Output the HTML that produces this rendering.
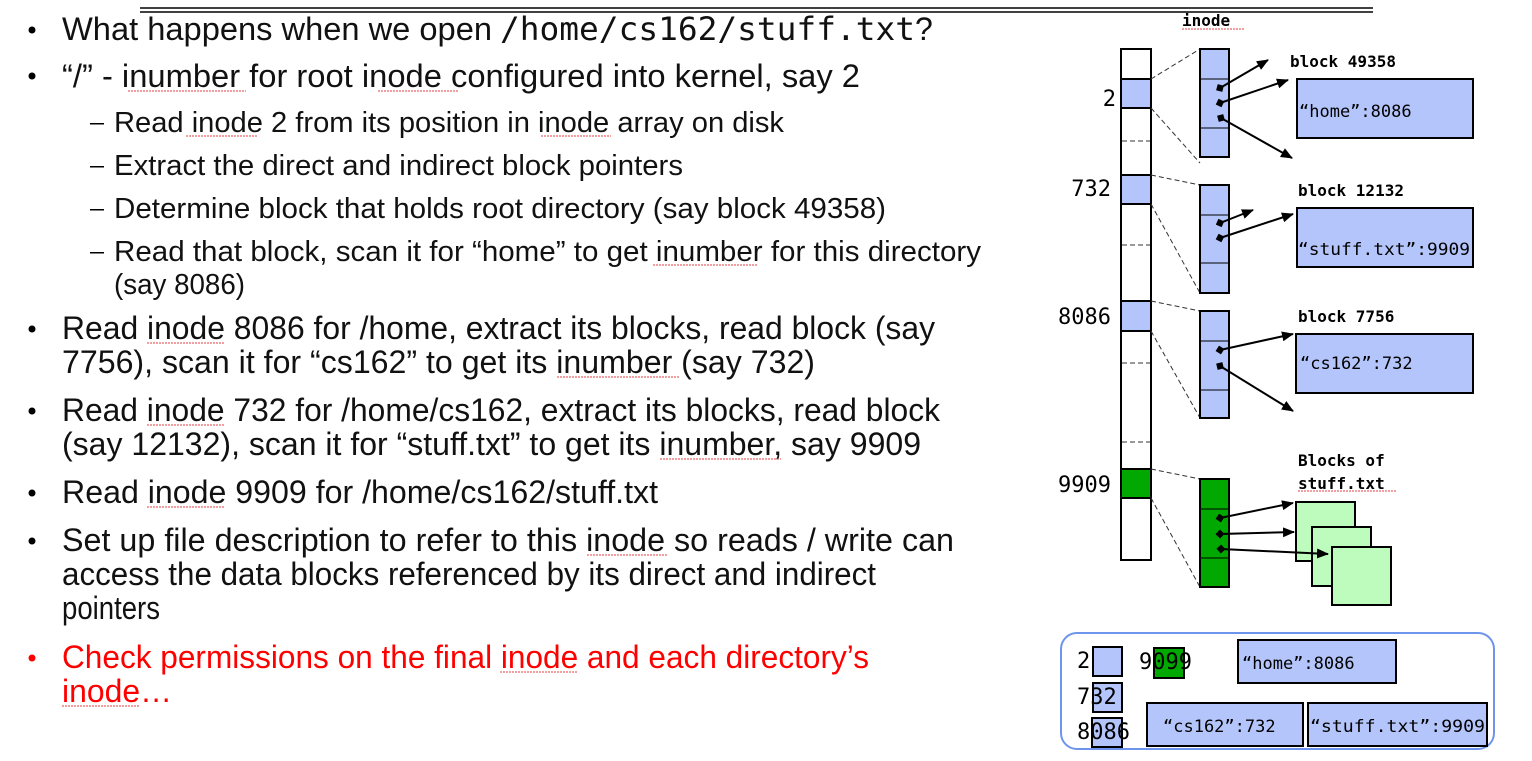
<!DOCTYPE html>
<html><head><meta charset="utf-8"><style>
html,body{margin:0;padding:0;background:#fff;}
svg{display:block;}
.t{font-family:"Liberation Sans",sans-serif;font-size:32px;fill:#111;}
.s{font-family:"Liberation Sans",sans-serif;font-size:29px;fill:#111;}
.r{fill:#f00;}
.m{font-family:"DejaVu Sans Mono","Liberation Mono",monospace;}
.b{font-family:"DejaVu Sans Mono","Liberation Mono",monospace;font-weight:bold;font-size:16px;}
.n{font-family:"DejaVu Sans Mono","Liberation Mono",monospace;font-size:22px;}
.lt{font-family:"DejaVu Sans Mono","Liberation Mono",monospace;font-size:17px;}
</style></head><body>
<svg width="1532" height="761" viewBox="0 0 1532 761" xmlns="http://www.w3.org/2000/svg">
<defs>
<marker id="ah" markerWidth="12" markerHeight="10" refX="11" refY="5" orient="auto" markerUnits="userSpaceOnUse"><path d="M0,0 L12,5 L0,10 z" fill="#000"/></marker>
<marker id="dm" markerWidth="9" markerHeight="9" refX="4.5" refY="4.5" orient="auto" markerUnits="userSpaceOnUse"><path d="M4.5,0 L9,4.5 L4.5,9 L0,4.5 z" fill="#000"/></marker>
</defs>
<line x1="140" y1="8" x2="1373" y2="8" stroke="#000" stroke-width="1.5"/>
<line x1="140" y1="12" x2="1373" y2="12" stroke="#000" stroke-width="1.5"/>

<g fill="#000">
<circle cx="32" cy="30" r="3.5"/><circle cx="32" cy="76" r="3.5"/>
<circle cx="32" cy="329" r="3.5"/><circle cx="32" cy="411" r="3.5"/>
<circle cx="32" cy="493" r="3.5"/><circle cx="32" cy="541" r="3.5"/>
<circle cx="32" cy="658" r="3.5" fill="#f00"/>
<rect x="90" y="123" width="14" height="1.5"/><rect x="90" y="166" width="14" height="1.5"/>
<rect x="90" y="209" width="14" height="1.5"/><rect x="90" y="252" width="14" height="1.5"/>
</g>
<text class="t" x="62" y="40" textLength="430" lengthAdjust="spacingAndGlyphs">What happens when we open</text>
<text class="t m" x="500" y="40" textLength="415" lengthAdjust="spacingAndGlyphs">/home/cs162/stuff.txt</text>
<text class="t" x="915" y="40">?</text>
<text class="t" x="62" y="87" textLength="798" lengthAdjust="spacingAndGlyphs">“/” - inumber for root inode configured into kernel, say 2</text>
<text class="s" x="114" y="132" textLength="670" lengthAdjust="spacingAndGlyphs">Read inode 2 from its position in inode array on disk</text>
<text class="s" x="114" y="175" textLength="569" lengthAdjust="spacingAndGlyphs">Extract the direct and indirect block pointers</text>
<text class="s" x="114" y="218" textLength="772" lengthAdjust="spacingAndGlyphs">Determine block that holds root directory (say block 49358)</text>
<text class="s" x="114" y="261" textLength="867" lengthAdjust="spacingAndGlyphs">Read that block, scan it for “home” to get inumber for this directory</text>
<text class="s" x="114" y="294" textLength="131" lengthAdjust="spacingAndGlyphs">(say 8086)</text>
<text class="t" x="62" y="339" textLength="873" lengthAdjust="spacingAndGlyphs">Read inode 8086 for /home, extract its blocks, read block (say</text>
<text class="t" x="62" y="373" textLength="753" lengthAdjust="spacingAndGlyphs">7756), scan it for “cs162” to get its inumber (say 732)</text>
<text class="t" x="62" y="421" textLength="878" lengthAdjust="spacingAndGlyphs">Read inode 732 for /home/cs162, extract its blocks, read block</text>
<text class="t" x="62" y="455" textLength="859" lengthAdjust="spacingAndGlyphs">(say 12132), scan it for “stuff.txt” to get its inumber, say 9909</text>
<text class="t" x="62" y="503" textLength="596" lengthAdjust="spacingAndGlyphs">Read inode 9909 for /home/cs162/stuff.txt</text>
<text class="t" x="62" y="551" textLength="892" lengthAdjust="spacingAndGlyphs">Set up file description to refer to this inode so reads / write can</text>
<text class="t" x="62" y="585" textLength="814" lengthAdjust="spacingAndGlyphs">access the data blocks referenced by its direct and indirect</text>
<text class="t" x="62" y="619" textLength="98" lengthAdjust="spacingAndGlyphs">pointers</text>
<text class="t r" x="62" y="668" textLength="807" lengthAdjust="spacingAndGlyphs">Check permissions on the final inode and each directory’s</text>
<text class="t r" x="62" y="702" textLength="110" lengthAdjust="spacingAndGlyphs">inode…</text>

<g stroke="#e04040" stroke-width="1" fill="none" stroke-dasharray="2,1">
<line x1="128" y1="91" x2="246" y2="91"/><line x1="378" y1="91" x2="458" y2="91"/>
<line x1="186" y1="136" x2="258" y2="136"/><line x1="541" y1="136" x2="611" y2="136"/>
<line x1="653" y1="265" x2="757" y2="265"/>
<line x1="147" y1="343" x2="225" y2="343"/><line x1="557" y1="377" x2="680" y2="377"/>
<line x1="147" y1="425" x2="225" y2="425"/><line x1="660" y1="459" x2="781" y2="459"/>
<line x1="147" y1="507" x2="225" y2="507"/><line x1="587" y1="555" x2="667" y2="555"/>
<line x1="500" y1="672" x2="578" y2="672"/><line x1="62" y1="706" x2="140" y2="706"/>
<line x1="1182" y1="29" x2="1245" y2="29"/><line x1="1298" y1="491" x2="1397" y2="491"/>
</g>

<text class="b" x="1182" y="26" font-size="18">inode</text>
<rect x="1121" y="49" width="30" height="511" fill="#fff" stroke="#000" stroke-width="2"/>
<rect x="1121" y="79" width="30" height="29" fill="#b4c5fb" stroke="#000" stroke-width="2"/>
<rect x="1121" y="175" width="30" height="29" fill="#b4c5fb" stroke="#000" stroke-width="2"/>
<rect x="1121" y="301" width="30" height="30" fill="#b4c5fb" stroke="#000" stroke-width="2"/>
<rect x="1121" y="469" width="30" height="29" fill="#00a800" stroke="#000" stroke-width="2"/>
<g stroke="#333" stroke-width="1" stroke-dasharray="5,3">
<line x1="1122" y1="141" x2="1150" y2="141"/><line x1="1122" y1="245" x2="1150" y2="245"/>
<line x1="1122" y1="363" x2="1150" y2="363"/><line x1="1122" y1="442" x2="1150" y2="442"/>
<line x1="1151" y1="79" x2="1200" y2="49"/><line x1="1151" y1="108" x2="1200" y2="163"/>
<line x1="1151" y1="175" x2="1200" y2="185"/><line x1="1151" y1="204" x2="1200" y2="293"/>
<line x1="1151" y1="301" x2="1200" y2="311"/><line x1="1151" y1="331" x2="1200" y2="418"/>
<line x1="1151" y1="469" x2="1200" y2="479"/><line x1="1151" y1="498" x2="1200" y2="587"/>
</g>
<text class="n" x="1116" y="106" text-anchor="end">2</text>
<text class="n" x="1111" y="196" text-anchor="end">732</text>
<text class="n" x="1111" y="324" text-anchor="end">8086</text>
<text class="n" x="1111" y="492" text-anchor="end">9909</text>

<g stroke="#000" stroke-width="2">
<rect x="1200" y="49" width="29" height="108" fill="#b4c5fb"/>
<line x1="1200" y1="79" x2="1229" y2="79" stroke-width="1"/><line x1="1200" y1="128" x2="1229" y2="128" stroke-width="1"/>
<rect x="1200" y="185" width="29" height="108" fill="#b4c5fb"/>
<line x1="1200" y1="215" x2="1229" y2="215" stroke-width="1"/><line x1="1200" y1="263" x2="1229" y2="263" stroke-width="1"/>
<rect x="1200" y="311" width="29" height="107" fill="#b4c5fb"/>
<line x1="1200" y1="341" x2="1229" y2="341" stroke-width="1"/><line x1="1200" y1="390" x2="1229" y2="390" stroke-width="1"/>
<rect x="1200" y="479" width="29" height="108" fill="#00a800"/>
<line x1="1200" y1="509" x2="1229" y2="509" stroke-width="1"/><line x1="1200" y1="558" x2="1229" y2="558" stroke-width="1"/>
</g>
<g stroke="#000" stroke-width="2" marker-end="url(#ah)" marker-start="url(#dm)">
<line x1="1220" y1="88" x2="1268" y2="60"/><line x1="1220" y1="103" x2="1288" y2="80"/><line x1="1221" y1="118" x2="1292" y2="158"/>
<line x1="1220" y1="223" x2="1253" y2="210"/><line x1="1220" y1="238" x2="1293" y2="214"/>
<line x1="1220" y1="350" x2="1293" y2="334"/><line x1="1220" y1="366" x2="1293" y2="411"/>
</g>

<text class="b" x="1290" y="67" font-size="17">block 49358</text>
<rect x="1297" y="79" width="176" height="59" fill="#b4c5fb" stroke="#000" stroke-width="2"/>
<text class="lt" x="1299" y="117">“home”:8086</text>
<text class="b" x="1298" y="196" font-size="17">block 12132</text>
<rect x="1297" y="208" width="176" height="59" fill="#b4c5fb" stroke="#000" stroke-width="2"/>
<text class="lt" x="1298" y="255" textLength="172" lengthAdjust="spacingAndGlyphs">“stuff.txt”:9909</text>
<text class="b" x="1298" y="322" font-size="17">block 7756</text>
<rect x="1296" y="334" width="177" height="59" fill="#b4c5fb" stroke="#000" stroke-width="2"/>
<text class="lt" x="1300" y="369">“cs162”:732</text>
<text class="b" x="1298" y="466" font-size="17">Blocks of</text>
<text class="b" x="1298" y="489" font-size="17">stuff.txt</text>
<g fill="#bdfcbd" stroke="#000" stroke-width="2">
<rect x="1296" y="502" width="59" height="59"/>
<rect x="1312" y="527" width="59" height="59"/>
<rect x="1332" y="547" width="59" height="58"/>
</g>
<g stroke="#000" stroke-width="2" marker-end="url(#ah)" marker-start="url(#dm)">
<line x1="1220" y1="518" x2="1293" y2="503"/><line x1="1220" y1="534" x2="1294" y2="532"/><line x1="1221" y1="549" x2="1328" y2="554"/>
</g>

<rect x="1061" y="633" width="433" height="116" rx="16" fill="#fff" stroke="#6d95ee" stroke-width="2"/>
<g stroke="#000" stroke-width="2" fill="#b4c5fb">
<rect x="1093" y="647" width="29" height="29"/>
<rect x="1154" y="648" width="30" height="30" fill="#00a800"/>
<rect x="1238" y="640" width="158" height="43"/>
<rect x="1093" y="683" width="29" height="29"/>
<rect x="1092" y="718" width="30" height="29"/>
<rect x="1147" y="703" width="156" height="43"/>
<rect x="1308" y="703" width="179" height="43"/>
</g>
<text class="n" x="1077" y="668" font-size="20">2</text>
<text class="n" x="1139" y="669" font-size="20">9099</text>
<text class="lt" x="1242" y="669" font-size="18">“home”:8086</text>
<text class="n" x="1077" y="704" font-size="20">732</text>
<text class="n" x="1077" y="739" font-size="20">8086</text>
<text class="lt" x="1163" y="732" font-size="18">“cs162”:732</text>
<text class="lt" x="1310" y="732" font-size="18" textLength="175" lengthAdjust="spacingAndGlyphs">“stuff.txt”:9909</text>
</svg>
</body></html>
